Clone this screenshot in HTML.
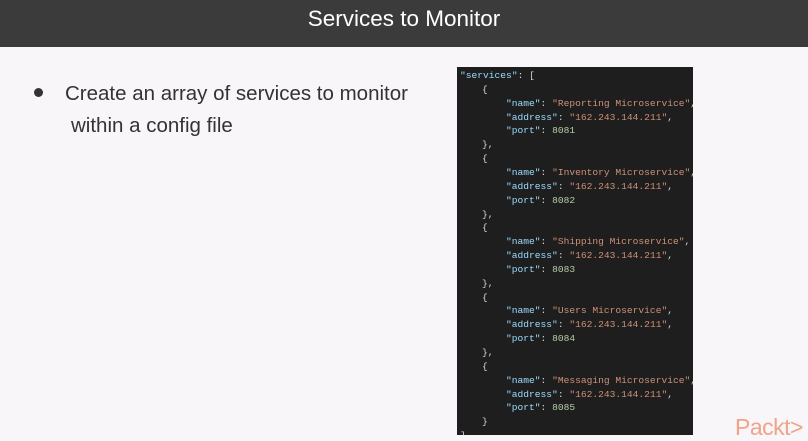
<!DOCTYPE html><html><head><style>
body{margin:0;width:808px;height:435px;overflow:hidden;background:#f8f6f8;font-family:"Liberation Sans",sans-serif;position:relative}
.hd{position:absolute;left:0;top:0;width:808px;height:47px;background:#3c3b3b;color:#fff;font-size:22.5px;text-align:center;line-height:38px}
.b{position:absolute;left:65px;top:78px;font-size:20.5px;color:#333;line-height:32px}
.dot{position:absolute;left:34px;top:88px;width:9px;height:9px;border-radius:50%;background:#333}
.code{position:absolute;left:457px;top:67px;width:236px;height:368px;background:#1e1e1e;font-family:"Liberation Mono",monospace;font-size:9.6px;color:#d4d4d4;overflow:hidden}
.l{position:absolute;white-space:pre;line-height:14px}
.k{color:#9cdcfe}.s{color:#ce9178}.n{color:#b5cea8}
.pk{position:absolute;left:735px;top:414px;font-size:23px;color:#f0a28a;letter-spacing:-0.5px}
</style></head><body>
<div class="hd">Services to Monitor</div>
<div class="dot"></div>
<div class="b">Create an array of services to monitor<br><span style="padding-left:6px">within a config file</span></div>
<div class="code" id="c"></div>
<div class="pk">Packt&gt;</div>
<script>
var c=document.getElementById('c'),h='';
var names=['Reporting','Inventory','Shipping','Users','Messaging'];
var y=2;function L(x,t){h+='<div class="l" style="left:'+x+'px;top:'+y+'px">'+t+'</div>';y+=13.85;}
L(3,'<span class="k">"services"</span>: [');
names.forEach(function(n,i){L(25,'{');L(49,'<span class="k">"name"</span>: <span class="s">"'+n+' Microservice"</span>,');L(49,'<span class="k">"address"</span>: <span class="s">"162.243.144.211"</span>,');L(49,'<span class="k">"port"</span>: <span class="n">808'+(i+1)+'</span>');L(25,i<4?'},':'}');});
L(3,']');
c.innerHTML=h;
</script>
</body></html>
